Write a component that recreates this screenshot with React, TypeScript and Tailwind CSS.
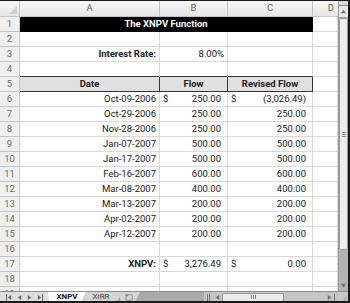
import React from "react";

const GRID = "border-r border-b border-[#d9d9d9]";

function RH({ n }: { n: number | string }) {
  return (
    <div className="w-[20px] shrink-0 h-full flex items-center justify-center bg-[#efefef] border-r border-b border-[#c4c4c4] text-[#707070]">
      {n}
    </div>
  );
}

function Cell({
  w,
  children,
  align = "right",
  bold = false,
  extra = "",
}: {
  w: string;
  children?: React.ReactNode;
  align?: "left" | "right" | "center";
  bold?: boolean;
  extra?: string;
}) {
  const j = align === "left" ? "justify-start pl-[3px]" : align === "center" ? "justify-center" : "justify-end pr-[3px]";
  return (
    <div className={`${w} shrink-0 h-full flex items-center ${j} ${bold ? "font-bold" : ""} ${extra || GRID}`}>
      {children}
    </div>
  );
}

function Acct({ w, dollar, value }: { w: string; dollar?: boolean; value?: string }) {
  return (
    <div className={`${w} shrink-0 h-full flex items-center justify-between pl-[3px] pr-[6px] ${GRID}`}>
      <span>{dollar ? "$" : ""}</span>
      <span>{value}</span>
    </div>
  );
}

const data: [number, string, string, string, boolean][] = [
  [6, "Oct-09-2006", "250.00", "(3,026.49)", true],
  [7, "Oct-29-2006", "250.00", "250.00", false],
  [8, "Nov-28-2006", "250.00", "250.00", false],
  [9, "Jan-07-2007", "500.00", "500.00", false],
  [10, "Jan-17-2007", "500.00", "500.00", false],
  [11, "Feb-16-2007", "600.00", "600.00", false],
  [12, "Mar-08-2007", "400.00", "400.00", false],
  [13, "Mar-13-2007", "200.00", "200.00", false],
  [14, "Apr-02-2007", "200.00", "200.00", false],
  [15, "Apr-12-2007", "200.00", "200.00", false],
];

function Empty({ n }: { n: number }) {
  return (
    <div className="flex h-[15px] shrink-0">
      <RH n={n} />
      <Cell w="w-[140px]" />
      <Cell w="w-[68px]" />
      <Cell w="w-[85px]" />
      <Cell w="w-[25px]" />
    </div>
  );
}

function Arrow({ dir }: { dir: "up" | "down" | "left" | "right" }) {
  const pts =
    dir === "up" ? "1,5 4,1 7,5" : dir === "down" ? "1,1 4,5 7,1" : dir === "left" ? "5,1 1,4 5,7" : "1,1 5,4 1,7";
  const vb = dir === "up" || dir === "down" ? "0 0 8 6" : "0 0 6 8";
  return (
    <svg viewBox={vb} className={dir === "up" || dir === "down" ? "w-[7px] h-[5px]" : "w-[5px] h-[7px]"}>
      <polygon points={pts} fill="#6a6a6a" />
    </svg>
  );
}

export default function App() {
  return (
    <div className="w-[350px] h-[303px] bg-white border-t border-r-2 border-b-2 border-[#1a1a1a] flex flex-col overflow-hidden font-['Roboto',sans-serif] text-[9.5px] text-[#222]">
      <div className="flex h-[290px]">
        {/* grid */}
        <div className="w-[338px] h-full overflow-hidden flex flex-col">
          {/* column header */}
          <div className="flex h-[16px] shrink-0 bg-gradient-to-b from-[#f6f6f6] to-[#e6e6e6] text-[#666]">
            <div className="w-[20px] shrink-0 h-full border-r border-b border-[#c4c4c4] relative">
              <svg viewBox="0 0 10 10" className="absolute right-[2px] bottom-[2px] w-[8px] h-[8px]">
                <polygon points="10,0 10,10 0,10" fill="#d0d0d0" />
              </svg>
            </div>
            <div className="w-[140px] shrink-0 h-full flex items-center justify-center border-r border-b border-[#c4c4c4]">A</div>
            <div className="w-[68px] shrink-0 h-full flex items-center justify-center border-r border-b border-[#c4c4c4]">B</div>
            <div className="w-[85px] shrink-0 h-full flex items-center justify-center border-r border-b border-[#c4c4c4]">C</div>
            <div className="w-[25px] shrink-0 h-full flex items-center justify-end pr-[4px] border-b border-[#c4c4c4]">D</div>
          </div>

          {/* row 1 */}
          <div className="flex h-[15px] shrink-0">
            <RH n={1} />
            <div className="w-[293px] shrink-0 h-full bg-black text-white font-bold flex items-center justify-center border-r border-b border-black">
              The XNPV Function
            </div>
            <Cell w="w-[25px]" />
          </div>
          <Empty n={2} />
          {/* row 3 */}
          <div className="flex h-[15px] shrink-0">
            <RH n={3} />
            <Cell w="w-[140px]" bold>
              Interest Rate:
            </Cell>
            <Cell w="w-[68px]">8.00%</Cell>
            <Cell w="w-[85px]" />
            <Cell w="w-[25px]" />
          </div>
          {/* row 4 */}
          <div className="flex h-[15px] shrink-0">
            <RH n={4} />
            <Cell w="w-[140px]" extra="border-r border-[#d9d9d9] border-b border-b-[#333]" />
            <Cell w="w-[68px]" extra="border-r border-[#d9d9d9] border-b border-b-[#333]" />
            <Cell w="w-[85px]" extra="border-r border-[#d9d9d9] border-b border-b-[#333]" />
            <Cell w="w-[25px]" />
          </div>
          {/* row 5 */}
          <div className="flex h-[15px] shrink-0">
            <RH n={5} />
            <Cell w="w-[140px]" align="center" bold extra="bg-[#e0e0e0] border-r border-b border-[#333]">
              Date
            </Cell>
            <Cell w="w-[68px]" align="center" bold extra="bg-[#e0e0e0] border-r border-b border-[#333]">
              Flow
            </Cell>
            <Cell w="w-[85px]" align="center" bold extra="bg-[#e0e0e0] border-r border-b border-[#333]">
              Revised Flow
            </Cell>
            <Cell w="w-[25px]" />
          </div>
          {data.map(([n, d, b, c, dl]) => (
            <div key={n} className="flex h-[15px] shrink-0">
              <RH n={n} />
              <Cell w="w-[140px]">{d}</Cell>
              <Acct w="w-[68px]" dollar={dl} value={b} />
              <Acct w="w-[85px]" dollar={dl} value={c} />
              <Cell w="w-[25px]" />
            </div>
          ))}
          <Empty n={16} />
          <div className="flex h-[15px] shrink-0">
            <RH n={17} />
            <Cell w="w-[140px]" bold>
              XNPV:
            </Cell>
            <Acct w="w-[68px]" dollar value="3,276.49" />
            <Acct w="w-[85px]" dollar value="0.00" />
            <Cell w="w-[25px]" />
          </div>
          <Empty n={18} />
          <Empty n={19} />
        </div>

        {/* vertical scrollbar */}
        <div className="w-[10px] h-full flex flex-col bg-[#c8c8c8] border-l border-[#9a9a9a]">
          <div className="h-[5px] shrink-0 bg-[#dcdcdc] border-b border-[#8a8a8a]" />
          <div className="h-[12px] shrink-0 flex items-center justify-center bg-[#e8e8e8] border-b border-[#a0a0a0]">
            <Arrow dir="up" />
          </div>
          <div className="h-[232px] shrink-0 bg-[#ececec] border border-[#999] rounded-[2px] flex items-center justify-center">
            <div className="flex flex-col gap-[1px]">
              <div className="w-[4px] h-px bg-[#888]" />
              <div className="w-[4px] h-px bg-[#888]" />
              <div className="w-[4px] h-px bg-[#888]" />
            </div>
          </div>
          <div className="flex-1 bg-[#b4b4b4]" />
          <div className="h-[12px] shrink-0 flex items-center justify-center bg-[#b4b4b4]">
            <Arrow dir="down" />
          </div>
        </div>
      </div>

      {/* tab bar */}
      <div className="flex h-[11px] shrink-0 bg-[#a9a9a9] border-t border-[#8c8c8c] text-[8px]">
        <div className="w-[48px] shrink-0 h-full bg-[#dedede] flex items-center justify-around px-[3px]">
          <div className="flex items-center">
            <div className="w-px h-[7px] bg-[#6a6a6a]" />
            <Arrow dir="left" />
          </div>
          <Arrow dir="left" />
          <Arrow dir="right" />
          <div className="flex items-center">
            <Arrow dir="right" />
            <div className="w-px h-[7px] bg-[#6a6a6a]" />
          </div>
        </div>
        <div className="w-[96px] shrink-0 h-full relative bg-[#a9a9a9]">
          <div className="absolute left-0 top-0 w-[36px] h-full bg-[#dedede]" />
          <div className="absolute left-[32px] top-0 w-[42px] h-full bg-[#d4d4d4] [clip-path:polygon(0_0,100%_0,88%_100%,8%_100%)] flex items-center justify-center text-[#444]">
            XIRR
          </div>
          <div className="absolute left-[70px] top-0 w-[22px] h-full bg-[#d4d4d4] [clip-path:polygon(0_0,100%_0,78%_100%,15%_100%)] flex items-center justify-center">
            <svg viewBox="0 0 10 8" className="w-[9px] h-[7px]">
              <rect x="1" y="1" width="7" height="6" fill="none" stroke="#777" strokeWidth="0.8" />
              <rect x="0.5" y="0.5" width="3" height="2" fill="#888" />
            </svg>
          </div>
          <div className="absolute left-0 top-0 w-[38px] h-full bg-white [clip-path:polygon(0_0,100%_0,86%_100%,4%_100%)] flex items-center justify-center font-bold text-[#111]">
            XNPV
          </div>
        </div>
        <div className="flex-1" />
        <div className="w-[134px] shrink-0 h-full flex items-center bg-[#c4c4c4]">
          <div className="w-[8px] h-full flex items-center justify-center gap-[1px]">
            <div className="w-px h-[7px] bg-[#777]" />
            <div className="w-px h-[7px] bg-[#777]" />
          </div>
          <div className="w-[10px] h-full flex items-center justify-center">
            <Arrow dir="left" />
          </div>
          <div className="w-[62px] h-[9px] bg-[#ececec] border border-[#999] rounded-[2px] flex items-center justify-center gap-[1px]">
            <div className="w-px h-[4px] bg-[#888]" />
            <div className="w-px h-[4px] bg-[#888]" />
            <div className="w-px h-[4px] bg-[#888]" />
          </div>
          <div className="flex-1" />
          <div className="w-[10px] h-full flex items-center justify-center">
            <Arrow dir="right" />
          </div>
          <div className="w-[4px] h-full flex items-center">
            <div className="w-px h-[7px] bg-[#777]" />
          </div>
        </div>
        <div className="w-[10px] shrink-0 h-full bg-[#c8c8c8] relative">
          <svg viewBox="0 0 8 8" className="absolute right-[1px] bottom-[1px] w-[6px] h-[6px]">
            <rect x="6" y="2" width="1" height="1" fill="#777" />
            <rect x="4" y="4" width="1" height="1" fill="#777" />
            <rect x="6" y="4" width="1" height="1" fill="#777" />
            <rect x="2" y="6" width="1" height="1" fill="#777" />
            <rect x="4" y="6" width="1" height="1" fill="#777" />
            <rect x="6" y="6" width="1" height="1" fill="#777" />
          </svg>
        </div>
      </div>
    </div>
  );
}
